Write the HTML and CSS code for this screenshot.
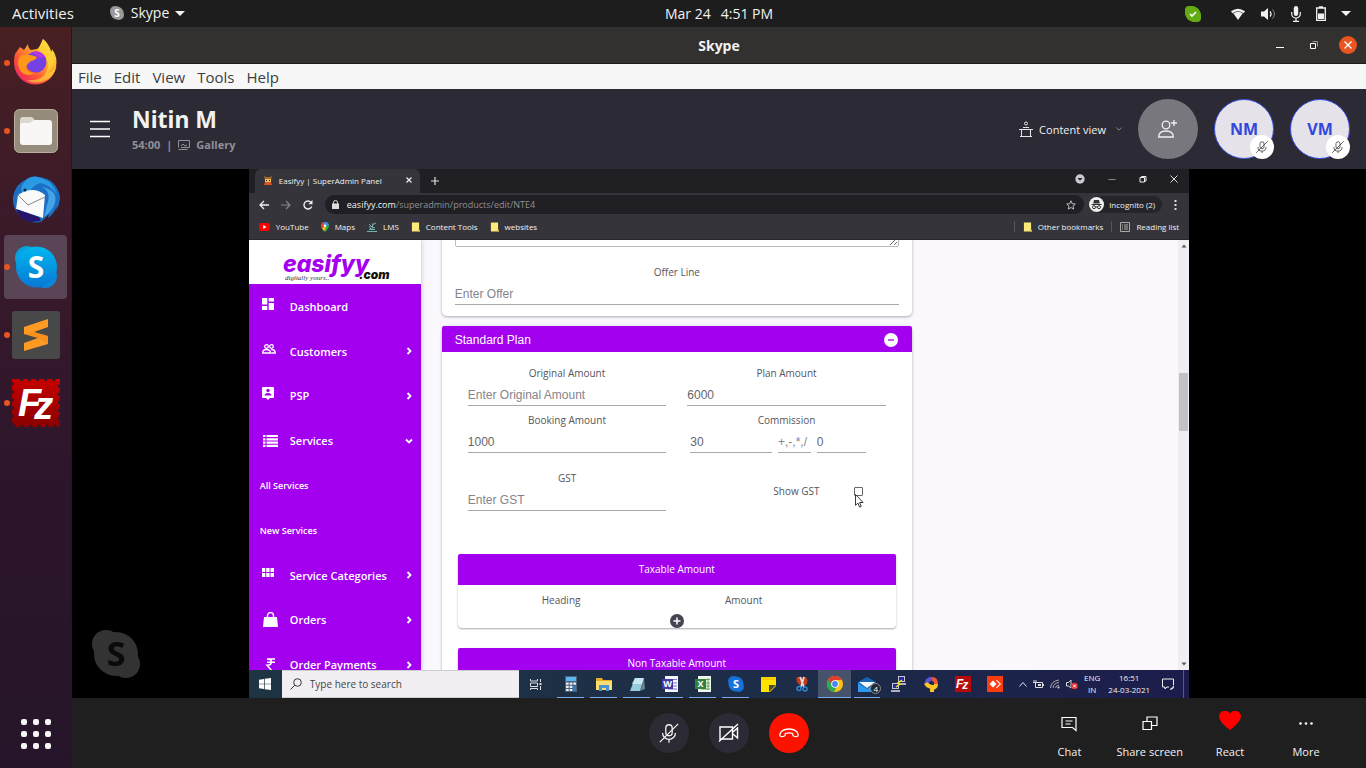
FILE: index.html
```html
<!DOCTYPE html>
<html lang="en">
<head>
<meta charset="utf-8">
<title>Skype</title>
<link rel="stylesheet" href="styles.css">
</head>
<body>
<svg class="defs" aria-hidden="true">
  <defs>
    <linearGradient id="sky" x1="0" y1="0" x2="0" y2="1"><stop offset="0" stop-color="#00b7f0"/><stop offset="1" stop-color="#0878d4"/></linearGradient>
    <linearGradient id="fire" x1="1" y1="0" x2="0" y2="1"><stop offset="0" stop-color="#fff44f"/><stop offset=".35" stop-color="#ffb02a"/><stop offset=".65" stop-color="#ff5634"/><stop offset="1" stop-color="#e5107a"/></linearGradient>
    <linearGradient id="red" x1="0" y1="0" x2="0" y2="1"><stop offset="0" stop-color="#c40000"/><stop offset="1" stop-color="#8c0000"/></linearGradient>
    <symbol id="mic-off" viewBox="0 0 24 24"><g fill="none" stroke="currentColor" stroke-width="1.4"><rect x="8.500" y="3" width="7" height="12" rx="3.500"/><path d="M5 12a7 7 0 0 0 14 0M12 19v3.500M2 22 22 2"/></g></symbol>
    <symbol id="folder" viewBox="0 0 10 10"><path d="M1 0h8v8l1 2H1z" fill="#fbe97a"/><path d="M8 8h2v2H8z" fill="#d9b93c"/></symbol>
    <symbol id="chev" viewBox="0 0 8 8"><path d="M2.500 1 5.500 4l-3 3" fill="none" stroke="currentColor" stroke-width="1.800"/></symbol>
  </defs>
</svg>

<header class="topbar">
  <div class="topbar-left">
    <button class="plain">Activities</button>
    <button class="plain app-menu">
      <svg width="14" height="14" viewBox="0 0 14 14"><rect width="10" height="10" rx="5" fill="#999"/><rect x="4" y="4" width="10" height="10" rx="5" fill="#999"/><circle cx="7" cy="7" r="6.500" fill="#999"/><text x="7" y="10.500" class="svg-s" font-size="10">S</text></svg>
      <span>Skype</span>
      <svg width="10" height="5" viewBox="0 0 10 5"><path d="M0 0h10L5 5z" fill="#f2f2f2"/></svg>
    </button>
  </div>
  <div class="clock"><span>Mar 24</span><span>4:51 PM</span></div>
  <div class="tray">
    <svg class="tray-skype" width="16" height="16" viewBox="0 0 16 16"><rect width="11" height="11" rx="4" fill="#62ab12"/><rect x="5" y="5" width="11" height="11" rx="4" fill="#62ab12"/><circle cx="8" cy="8" r="7.500" fill="#62ab12"/><path d="m5 8 2 2 4-4" fill="none" stroke="#fff" stroke-width="1.600"/></svg>
    <svg width="16" height="14" viewBox="0 0 16 14"><path d="M8 13 3.300 6.300q4.700-3 9.400 0z" fill="#f2f2f2"/><path d="M1 4.300q7-5 14 0l-1.500 2q-5.500-4-11 0z" fill="#f2f2f2"/></svg>
    <svg width="15" height="14" viewBox="0 0 15 14"><path d="M0 4.500h3L7 1v12L3 9.500H0z" fill="#f2f2f2"/><path d="M9 4.500q2 2.500 0 5" fill="none" stroke="#f2f2f2" stroke-width="1.300"/><path d="M11.500 2.500q4 4.500 0 9" fill="none" stroke="#888"/></svg>
    <svg width="10" height="16" viewBox="0 0 10 16"><rect x="2.800" width="4.400" height="10" rx="2.200" fill="#f2f2f2"/><path d="M.7 6v2a4.300 4 0 0 0 8.600 0V6M5 12v3M2 15.300h6" fill="none" stroke="#f2f2f2" stroke-width="1.200"/></svg>
    <svg width="10" height="15" viewBox="0 0 10 15"><path d="M.7 2h8.600v12.300H.7zM3 1h4" fill="none" stroke="#f2f2f2" stroke-width="1.300"/><path d="M2 7.500h6V13H2z" fill="#f2f2f2"/></svg>
    <svg width="10" height="5" viewBox="0 0 10 5"><path d="M0 0h10L5 5z" fill="#f2f2f2"/></svg>
  </div>
</header>

<div class="desktop">
  <nav class="dock" aria-label="Dock">
    <button class="dock-item running" aria-label="Firefox">
      <svg width="48" height="48" viewBox="0 0 48 48"><path d="M3 15 8 8l4 3 4-6q0 4 3 6l6-1q3-2 6-10 6 5 8 13 1-1 1-3 6 8 4 18a21 21 0 0 1-41 2Q1 23 3 15z" fill="url(#fire)"/><path d="M31 0q6 5 9 14 5 12-4 20 9-3 9-10A21 21 0 0 1 14 41q20 2 22-14 0-9-9-13 0-7 4-14z" fill="#ffd83a" opacity=".65"/><circle cx="24" cy="23" r="10.500" fill="#7541e5"/><path d="M20 13q9-3 14 6-3-2-7 0z" fill="#b833e1"/><path d="M8 17q8-3 17 1-1 3-6 4-3 2-5 6 2 6 9 6-10 5-15-3Q4 23 8 17z" fill="#ff9818"/></svg>
    </button>
    <button class="dock-item running" aria-label="Files">
      <svg width="48" height="48" viewBox="0 0 48 48"><rect x="2.500" y="2.500" width="43" height="43" rx="5" fill="#958c7b" stroke="#b7b09f"/><path d="M8 13q0-3 3-3h8q2 0 3 2l1 2h14q3 0 3 3v17q0 3-3 3H11q-3 0-3-3z" fill="#ddd8cd"/><path d="M8 18q0-2 2-2h8l4-3h15q3 0 3 3v19q0 3-3 3H11q-3 0-3-3z" fill="#f8f7f5"/></svg>
    </button>
    <button class="dock-item" aria-label="Thunderbird">
      <svg width="48" height="48" viewBox="0 0 48 48"><path d="M1 22Q3 9 15 4q5-4 12-2 17 2 21 19 0 8-4 15l1-5q-3 8-9 12l1-4-8 8q-12 2-20-5Q0 34 1 22z" fill="#1b6fc4"/><path d="M15 4q6-4 14-1 13 4 16 17-6-10-17-12-6 2-10 8l-6 3Q5 14 15 4z" fill="#2a9ae2"/><path d="M30 12q10 5 5 18l-3 12q8-5 11-14 3-13-13-16z" fill="#45a3e8"/><path d="M6 20q15-10 27 0l-2 23-27-9z" fill="#fafafa"/><path d="m6 20 10 10 17-8" fill="none" stroke="#888"/><path d="M4 34q2 9 13 13l12-1-2-4z" fill="#27146b"/><circle cx="13" cy="15" r="1.500" fill="#0b2344"/></svg>
    </button>
    <button class="dock-item running active" aria-label="Skype">
      <svg width="48" height="48" viewBox="0 0 48 48"><circle cx="15" cy="15" r="12" fill="#0aa0dc"/><circle cx="33" cy="33" r="12" fill="#0c86d8"/><circle cx="24.500" cy="24" r="20.500" fill="url(#sky)"/><text x="24" y="35" class="svg-s" font-size="30">S</text></svg>
    </button>
    <button class="dock-item running" aria-label="Sublime Text">
      <svg width="48" height="48" viewBox="0 0 48 48"><rect width="48" height="48" rx="3" fill="#484848"/><path d="m12 16 24-8v8l-14 5 14 4v8l-24 7v-8l14-5-14-4z" fill="#ff9b22"/><path d="m12 23 10-2 14 4v8l-10-6z" fill="#ef8618" opacity=".5"/></svg>
    </button>
    <button class="dock-item running" aria-label="FileZilla">
      <svg width="48" height="48" viewBox="0 0 48 48"><rect x="2.500" y="2.500" width="43" height="43" fill="url(#red)" stroke="url(#red)" stroke-width="5" stroke-dasharray="5.500 2.650"/><rect x="2" y="2" width="44" height="44" fill="url(#red)"/><text x="6" y="37" class="svg-fz" font-size="38">F<tspan dx="-7" dy="3">z</tspan></text></svg>
    </button>
    <button class="dock-apps" aria-label="Show applications"><i></i><i></i><i></i><i></i><i></i><i></i><i></i><i></i><i></i></button>
  </nav>

  <main class="window">
    <div class="titlebar">
      <span></span>
      <h1 class="window-title">Skype</h1>
      <div class="window-buttons">
        <button class="plain win-btn" aria-label="Minimize"><svg width="8" height="8" viewBox="0 0 8 8"><path d="M0 6.500h8" stroke="#fff"/></svg></button>
        <button class="plain win-btn" aria-label="Restore"><svg width="8" height="8" viewBox="0 0 8 8"><path d="M.5 2.500h5v5h-5z" fill="none" stroke="#fff"/><path d="M2.500.5h5v5" fill="none" stroke="#999"/></svg></button>
        <button class="plain win-btn win-close" aria-label="Close"><svg width="8" height="8" viewBox="0 0 8 8"><path d="m.5.5 7 7m0-7-7 7" stroke="#fff" stroke-width="1.400"/></svg></button>
      </div>
    </div>
    <div class="menubar">
      <button class="plain">File</button><button class="plain">Edit</button><button class="plain">View</button><button class="plain">Tools</button><button class="plain">Help</button>
    </div>

    <div class="call-header">
      <button class="plain hamburger" aria-label="Menu"><svg width="20" height="18" viewBox="0 0 20 18"><path d="M0 1.500h20M0 9h20M0 16.500h20" stroke="#fff" stroke-width="1.500"/></svg></button>
      <div class="call-info">
        <h2 class="call-name">Nitin M</h2>
        <div class="call-meta"><span>54:00</span><span>|</span><svg width="12" height="10" viewBox="0 0 12 10"><path d="M3 7.500h8.500v-7H.5v7M.5 9.500h9" fill="none" stroke="#929099"/><path d="m3 6 2-2 2 2 2-1" fill="none" stroke="#929099"/></svg><span>Gallery</span></div>
      </div>
      <button class="plain content-view">
        <svg width="14" height="16" viewBox="0 0 14 16"><g fill="none" stroke="#e6e6e6"><circle cx="7" cy="2.500" r="1.500"/><path d="M4 6.500h6M0 8.500h14M2.500 9v6M11.500 9v6M1 15.500h12"/></g></svg>
        <span>Content view</span>
        <svg width="6" height="4" viewBox="0 0 6 4"><path d="m.3.5 2.700 2.700L5.700.5" fill="none" stroke="#8b8992"/></svg>
      </button>
      <div class="people">
        <button class="avatar add" aria-label="Add people"><svg width="22" height="20" viewBox="0 0 22 20"><g fill="none" stroke="#f0f0f0" stroke-width="1.300"><circle cx="9" cy="6" r="3.800"/><path d="M1.700 18q0-6 7.300-6t7.300 6zM17 1v6M14 4h6"/></g></svg></button>
        <div class="avatar person">NM<span class="badge"><svg width="14" height="14"><use href="#mic-off"/></svg></span></div>
        <div class="avatar person">VM<span class="badge"><svg width="14" height="14"><use href="#mic-off"/></svg></span></div>
      </div>
    </div>

    <section class="stage">
      <svg class="watermark" width="48" height="48" viewBox="0 0 48 48"><circle cx="14" cy="14" r="14" fill="#333"/><circle cx="34" cy="34" r="14" fill="#333"/><circle cx="24" cy="24" r="22" fill="#333"/><text x="24" y="36" class="svg-s dark" font-size="34">S</text></svg>

      <div class="shared">
        <div class="tabstrip">
          <div class="tab">
            <svg width="10" height="10" viewBox="0 0 10 10"><path d="m1 1 2 1h4l2-1-1 4H2z" fill="#a8672a"/><path d="M2 4h6v3H2z" fill="#f0c05a"/><path d="M2 7h6l1 3H1z" fill="#d8572a"/><path d="M3 5h1v1H3zM6 5h1v1H6z" fill="#222"/></svg>
            <span>Easifyy | SuperAdmin Panel</span>
            <button class="plain" aria-label="Close tab"><svg width="6" height="6" viewBox="0 0 6 6"><path d="m.5.5 5 5m0-5-5 5" stroke="#eee" stroke-width="1.200"/></svg></button>
          </div>
          <button class="plain new-tab" aria-label="New tab"><svg width="8" height="8" viewBox="0 0 8 8"><path d="M4 0v8M0 4h8" stroke="#ddd" stroke-width="1.200"/></svg></button>
          <div class="chrome-buttons">
            <svg width="10" height="10" viewBox="0 0 10 10"><circle cx="5" cy="5" r="4.700" fill="#c9c9cf"/><path d="M2.500 4h5L5 6.800z" fill="#222"/></svg>
            <svg width="8" height="8" viewBox="0 0 8 8"><path d="M.5 4.500h7" stroke="#888"/></svg>
            <svg width="8" height="8" viewBox="0 0 8 8"><path d="M1 2.500h4.500V7H1zM2.500 2.500v-1H7V6H5.500" fill="none" stroke="#eee"/></svg>
            <svg width="8" height="8" viewBox="0 0 8 8"><path d="m.5.5 7 7m0-7-7 7" stroke="#ddd"/></svg>
          </div>
        </div>
        <div class="toolbar">
          <button class="plain" aria-label="Back"><svg width="10" height="10" viewBox="0 0 10 10"><path d="M10 5H1m4-4L1 5l4 4" fill="none" stroke="#eee" stroke-width="1.300"/></svg></button>
          <button class="plain" aria-label="Forward"><svg width="10" height="10" viewBox="0 0 10 10"><path d="M0 5h9M5 1l4 4-4 4" fill="none" stroke="#85858b" stroke-width="1.200"/></svg></button>
          <button class="plain" aria-label="Reload"><svg width="10" height="10" viewBox="0 0 10 10"><path d="M8.700 6.500A4 4 0 1 1 8 2.300" fill="none" stroke="#eee" stroke-width="1.400"/><path d="M9.500 0v4.300H5.300z" fill="#eee"/></svg></button>
          <div class="address">
            <svg width="7" height="9" viewBox="0 0 7 9"><path d="M0 3.500h7V9H0z" fill="#ddd"/><path d="M1.500 4V2.500a2 2 0 0 1 4 0V4" fill="none" stroke="#ddd"/></svg>
            <div class="url" role="textbox" aria-label="Address">easifyy.com<span>/superadmin/products/edit/NTE4</span></div>
            <svg width="10" height="10" viewBox="0 0 10 10"><path d="m5 .8 1.200 2.900 3.100.3L7 6.100l.7 3L5 7.500 2.300 9.100l.7-3L.7 4l3.100-.3z" fill="none" stroke="#ccc" stroke-width=".9"/></svg>
          </div>
          <div class="incognito">
            <svg width="15" height="15" viewBox="0 0 15 15"><circle cx="7.500" cy="7.500" r="7.500" fill="#eee"/><path d="M5 3h5l.8 3.500H4.200zM2.500 7h10v1h-10z" fill="#333"/><g fill="none" stroke="#333"><circle cx="5" cy="10.200" r="1.500"/><circle cx="10" cy="10.200" r="1.500"/><path d="M6.500 10h2"/></g></svg>
            <span>Incognito (2)</span>
          </div>
          <button class="plain kebab" aria-label="Browser menu"><svg width="3" height="10" viewBox="0 0 3 10"><path d="M.5 0h2v2h-2zm0 4h2v2h-2zm0 4h2v2h-2z" fill="#ddd"/></svg></button>
        </div>
        <div class="bookmarks">
          <a href="#"><svg width="11" height="8" viewBox="0 0 11 8"><rect width="11" height="8" rx="2" fill="#f00"/><path d="m4.200 2 3.300 2-3.300 2z" fill="#fff"/></svg>YouTube</a>
          <a href="#"><svg width="8" height="10" viewBox="0 0 8 10"><path d="M4 10Q0 6 0 4a4 4 0 0 1 8 0q0 2-4 6z" fill="#34a853"/><path d="M0 4a4 4 0 0 1 4-4L2 6.500Q0 5 0 4z" fill="#ea4335"/><path d="M3 0q3-1 5 3L4 4z" fill="#4285f4"/><path d="M1 6.500 4 4l1 2-2 3z" fill="#fbbc04"/><circle cx="4" cy="3.800" r="1.200" fill="#fff"/></svg>Maps</a>
          <a href="#"><svg width="10" height="10" viewBox="0 0 10 10"><path d="M0 9.500h10M2 7.500h6M4 5q2-3 5-4M2 2l3 3 3 1M6 1 5 7M3 4q-1 2 1 3" fill="none" stroke="#6fb5ac"/></svg>LMS</a>
          <a href="#"><svg width="9" height="10"><use href="#folder"/></svg>Content Tools</a>
          <a href="#"><svg width="9" height="10"><use href="#folder"/></svg>websites</a>
          <a href="#" class="push"><svg width="9" height="10"><use href="#folder"/></svg>Other bookmarks</a>
          <a href="#" class="reading"><svg width="10" height="10" viewBox="0 0 10 10"><path d="M.5.5h9v9h-9zM2 3h1m1 0h4M2 5h1m1 0h4M2 7h1m1 0h4" fill="none" stroke="#aaa"/></svg>Reading list</a>
        </div>

        <div class="page">
          <aside class="side">
            <div class="logo">
              <svg width="112" height="34" viewBox="0 0 112 34"><text x="4" y="23" class="logo-main">easifyy</text><text x="80" y="30" class="logo-com">.com</text><text x="6" y="31" class="logo-tag">digitally yours..</text></svg>
            </div>
            <nav class="side-nav">
              <a href="#"><svg width="12" height="12" viewBox="0 0 12 12"><path d="M0 0h5.300v6.500H0zM6.700 0H12v3.500H6.700zM0 8h5.300v4H0zM6.700 5H12v7H6.700z" fill="#fff"/></svg><span>Dashboard</span></a>
              <a href="#"><svg width="14" height="10" viewBox="0 0 14 10"><g fill="none" stroke="#fff" stroke-width="1.300"><circle cx="4.500" cy="2.500" r="1.800"/><circle cx="9.500" cy="2.500" r="1.800"/><path d="M.7 9q0-3.500 3.800-3.500T8.500 9zM9 5.500q4.300 0 4.300 3.500h-4"/></g></svg><span>Customers</span><svg width="8" height="8"><use href="#chev"/></svg></a>
              <a href="#"><svg width="12" height="13" viewBox="0 0 12 13"><path d="M1 0h10q1 0 1 1v9q0 1-1 1H8l-2 2-2-2H1q-1 0-1-1V1q0-1 1-1z" fill="#fff"/><circle cx="6" cy="3.500" r="1.700" fill="#a300f0"/><path d="M2.500 8.500q0-2.500 3.500-2.500t3.500 2.500z" fill="#a300f0"/></svg><span>PSP</span><svg width="8" height="8"><use href="#chev"/></svg></a>
              <a href="#"><svg class="wide" width="15" height="12" viewBox="0 0 15 12"><path d="M0 1h2.500m1 0H15M0 4.300h2.500m1 0H15M0 7.600h2.500m1 0H15M0 10.900h2.500m1 0H15" stroke="#fff" stroke-width="2.200"/></svg><span>Services</span><svg width="8" height="8" viewBox="0 0 8 8"><path d="m1 2.500 3 3 3-3" fill="none" stroke="#fff" stroke-width="1.800"/></svg></a>
              <a href="#" class="sub">All Services</a>
              <a href="#" class="sub">New Services</a>
              <a href="#"><svg width="12" height="9" viewBox="0 0 12 9"><path d="M0 0h3.300v4H0zm4.200 0h3.400v4H4.200zm4.300 0H12v4H8.500zM0 5h3.300v4H0zm4.200 0h3.400v4H4.200zm4.300 0H12v4H8.500z" fill="#fff"/></svg><span>Service Categories</span><svg width="8" height="8"><use href="#chev"/></svg></a>
              <a href="#"><svg class="wide" width="15" height="15" viewBox="0 0 15 15"><path d="M1 5h13l1 10H0z" fill="#fff"/><path d="M4.500 7V3.500a3 3 0 0 1 6 0V7" fill="none" stroke="#fff" stroke-width="1.400"/></svg><span>Orders</span><svg width="8" height="8"><use href="#chev"/></svg></a>
              <a href="#"><svg class="wide" width="15" height="13" viewBox="0 0 15 13"><path d="M4 1h8M4 4.200h8M4 1.200c6-1 6 6 0 6L9 13" fill="none" stroke="#fff" stroke-width="1.600"/></svg><span>Order Payments</span><svg width="8" height="8"><use href="#chev"/></svg></a>
            </nav>
          </aside>

          <form class="content">
            <section class="card offer">
              <textarea aria-label="Description"></textarea>
              <div class="field"><label for="offer">Offer Line</label><input id="offer" placeholder="Enter Offer"></div>
            </section>
            <section class="card plan">
              <header class="plan-head"><h3>Standard Plan</h3><button type="button" class="plain" aria-label="Collapse"><svg width="14" height="14" viewBox="0 0 14 14"><circle cx="7" cy="7" r="7" fill="#fff"/><path d="M4 7h6" stroke="#a300f0" stroke-width="1.300"/></svg></button></header>
              <div class="plan-grid">
                <div class="field"><label for="orig">Original Amount</label><input id="orig" placeholder="Enter Original Amount"></div>
                <div class="field"><label for="plan">Plan Amount</label><input id="plan" value="6000"></div>
                <div class="field"><label for="book">Booking Amount</label><input id="book" value="1000"></div>
                <div class="field"><label for="comm">Commission</label><div class="commission"><input id="comm" value="30"><input aria-label="Operator" placeholder="+,-,*,/"><input aria-label="Adjustment" value="0"></div></div>
                <div class="field last"><label for="gst">GST</label><input id="gst" placeholder="Enter GST"></div>
                <div class="show-gst"><label for="show">Show GST</label><span class="check-wrap"><input type="checkbox" id="show"><svg class="cursor" width="9" height="14" viewBox="0 0 9 14"><path d="M.5.5v10.800l2.400-2.200 1.700 4 1.700-.7-1.700-3.900h3.500z" fill="#fff" stroke="#222" stroke-width=".9"/></svg></span></div>
              </div>
              <section class="tax">
                <h4>Taxable Amount</h4>
                <div class="tax-cols"><span>Heading</span><span>Amount</span></div>
                <button type="button" class="plain tax-add" aria-label="Add taxable amount"><svg width="14" height="14" viewBox="0 0 14 14"><circle cx="7" cy="7" r="7" fill="#464450"/><path d="M7 3.500v7M3.500 7h7" stroke="#fff" stroke-width="1.500"/></svg></button>
              </section>
              <section class="tax">
                <h4>Non Taxable Amount</h4>
              </section>
            </section>
          </form>
          <div class="scrollbar"><svg width="6" height="4" viewBox="0 0 6 4"><path d="M.5 3.500h5L3 .5z" fill="#555"/></svg><div class="track"><div class="thumb"></div></div><svg width="6" height="4" viewBox="0 0 6 4"><path d="M.5.5h5L3 3.500z" fill="#555"/></svg></div>
        </div>

        <div class="taskbar">
          <button class="plain start" aria-label="Start"><svg width="12" height="12" viewBox="0 0 12 12"><path d="m0 1.700 5-.8v4.800H0zM5.700.8 12 0v5.700H5.700zM0 6.300h5v4.800l-5-.8zM5.700 6.300H12V12l-6.300-.8z" fill="#fff"/></svg></button>
          <label class="search"><svg width="12" height="12" viewBox="0 0 12 12"><circle cx="7.500" cy="4.500" r="3.800" fill="none" stroke="#333"/><path d="M4.800 7.200.5 11.500" stroke="#333"/></svg><input aria-label="Search" placeholder="Type here to search"></label>
          <button class="plain taskview" aria-label="Task view"><svg width="12" height="11" viewBox="0 0 12 11"><path d="M.5 0v2h7V0M.5 4v3.500h7V4zM.5 11V9.500h7V11M10.500 0v3M10.500 7v4" fill="none" stroke="#ddd"/><path d="M9.500 4h2v2h-2z" fill="#ddd"/></svg></button>
          <div class="apps">
            <button class="open" aria-label="Calculator"><svg width="12" height="16" viewBox="0 0 12 16"><path d="M0 0h12v16H0z" fill="#4b5f7d"/><path d="M1 1h10v4H1z" fill="#59b8f0"/><path d="M1 6.500h2.700v2.300H1zm3.700 0h2.700v2.300H4.700zm3.600 0H11v2.300H8.300zM1 9.700h2.700V12H1zm3.700 0h2.700V12H4.700zM1 13h2.700v2H1zm3.700 0h2.700v2H4.700z" fill="#e6edf5"/><path d="M8.300 9.700H11V15H8.300z" fill="#2a7ec8"/></svg></button>
            <button class="open" aria-label="File Explorer"><svg width="16" height="14" viewBox="0 0 16 14"><path d="M0 1h6l1 2h9v10H0z" fill="#e5ae2e"/><path d="M0 4h16v9H0z" fill="#fbdc70"/><path d="M3 8h10v6h-3v-3H6v3H3z" fill="#4a93d3"/></svg></button>
            <button class="open" aria-label="Notepad"><svg width="16" height="15" viewBox="0 0 16 15"><path d="M6 1h9l-4 13H1z" fill="#94cddd"/><path d="m6 1 9 0-2 6H3z" fill="#c5e8ef"/><path d="m15 1 1 11-5 2z" fill="#68848c"/></svg></button>
            <button class="open" aria-label="Word"><svg width="16" height="16" viewBox="0 0 16 16"><path d="M3 0h13v16H3z" fill="#f3f4fc"/><path d="M6 3.500h9M6 7h9M6 10h9M6 13h9" stroke="#707fc5"/><path d="M0 3h11v10H0z" fill="#433aa5"/><text x="5.500" y="11" class="svg-s" font-size="9">W</text></svg></button>
            <button class="open" aria-label="Excel"><svg width="16" height="16" viewBox="0 0 16 16"><path d="M3 0h13v16H3z" fill="#eef8ed"/><path d="M6 3.500h9M6 7h9M6 10h9M6 13h9M13 2v12" stroke="#66a263"/><path d="M0 3h11v10H0z" fill="#2f8140"/><text x="5.500" y="11" class="svg-s" font-size="9">X</text></svg></button>
            <button class="open" aria-label="Skype"><svg width="16" height="16" viewBox="0 0 16 16"><circle cx="5" cy="5" r="5" fill="#0f6bd0"/><circle cx="11" cy="11" r="5" fill="#0f6bd0"/><circle cx="8" cy="8" r="7.500" fill="#1474db"/><text x="8" y="12" class="svg-s" font-size="11">S</text></svg></button>
            <button aria-label="Sticky Notes"><svg width="15" height="15" viewBox="0 0 15 15"><path d="M0 0h15v9l-6 6H0z" fill="#ffe400"/><path d="M8 15V8h7z" fill="#4b4a34"/><path d="M0 0h15v3H0z" fill="#ffd000"/></svg></button>
            <button aria-label="Snipping Tool"><svg width="14" height="16" viewBox="0 0 14 16"><path d="M2 1h9q3 4 0 8H5Q0 6 2 1z" fill="#c53a1c"/><path d="m5 1 4 10M9 1 6 11" stroke="#d9dee5" stroke-width="1.800"/><g fill="none" stroke="#2e86d3" stroke-width="1.500"><circle cx="4" cy="12.500" r="2"/><circle cx="10" cy="13" r="2"/></g></svg></button>
            <button class="open current" aria-label="Chrome"><svg width="16" height="16" viewBox="0 0 16 16"><circle cx="8" cy="8" r="8" fill="#fbc116"/><path d="M1 4a8 8 0 0 0 6 12l3-6z" fill="#2da94f"/><path d="M1 4 5 11 8 4z" fill="#2da94f"/><path d="M1 4a8 8 0 0 1 14 0H8L5 8z" fill="#e33b2e"/><circle cx="8" cy="8" r="3.800" fill="#fff"/><circle cx="8" cy="8" r="2.900" fill="#4285f4"/></svg></button>
            <button class="open tail" aria-label="Mail"><svg width="18" height="15" viewBox="0 0 18 15"><path d="m0 5 9-5 9 5v10H0z" fill="#1266b5"/><path d="m1 5 16 0-8 6z" fill="#f2f7fc"/><path d="m0 6 9 6 9-6v9H0z" fill="#2d9aed"/></svg><span class="count">4</span></button>
            <button class="tail" aria-label="PuTTY"><svg width="16" height="16" viewBox="0 0 16 16"><path d="M7 0h7v6H7zM1 7h7v6H1z" fill="#c7c7d2"/><path d="M8 1h5v4H8zM2 8h5v4H2z" fill="#2727a6"/><path d="M7 7h8v2H7zM0 14h9v2H0z" fill="#b2b2be"/><path d="m11 4-4 3 2 1-4 3" fill="none" stroke="#f3e422" stroke-width="1.400"/></svg></button>
            <button class="tail" aria-label="Media"><svg width="14" height="15" viewBox="0 0 14 15"><g fill="none" stroke-width="4"><path d="M3 8a4.500 4.500 0 0 1 5-6" stroke="#5f55d8"/><path d="M8 2q4 0 4 5" stroke="#f05638"/><path d="M12 7q0 4-5 4" stroke="#fbc625"/><path d="M2 6q1 3 6 4v5" stroke="#fbc625"/></g></svg></button>
            <button class="tail" aria-label="FileZilla"><svg width="16" height="16" viewBox="0 0 16 16"><path d="M0 0h16v16H0z" fill="#b60b0b"/><text x="1" y="12" class="svg-fz" font-size="12">F<tspan dx="-1" dy="1">z</tspan></text></svg></button>
            <button class="tail" aria-label="AnyDesk"><svg width="16" height="16" viewBox="0 0 16 16"><path d="M0 0h16v16H0z" fill="#fb3b10"/><path d="m6 4.500 3.500 3.500L6 11.500 2.500 8z" fill="#fff"/><path d="m9 4.500 1-.5 4 4-4 4-1-.5L12.500 8z" fill="#fff"/></svg></button>
          </div>
          <div class="sys">
            <svg width="8" height="5" viewBox="0 0 8 5"><path d="m.5 4.500 3.500-4 3.500 4" fill="none" stroke="#ddd"/></svg>
            <svg width="11" height="9" viewBox="0 0 11 9"><path d="M2.500 2.500h7v5h-7zM10.500 4v2M1 0v2m2-2v2M0 2.500h4" fill="none" stroke="#ddd"/><path d="M5 4h3v2H5z" fill="#ddd"/></svg>
            <svg width="10" height="10" viewBox="0 0 10 10"><path d="M.5 9Q1 2 9 1M3 9q.5-5 6-5.500M5.500 9q.5-2.500 3.500-3" fill="none" stroke="#aaa"/><circle cx="8.500" cy="8.500" r="1" fill="#ddd"/></svg>
            <svg width="12" height="11" viewBox="0 0 12 11"><path d="M.5 3.500h2L5 1v8L2.500 7h-2z" fill="none" stroke="#ddd"/><circle cx="8.500" cy="7" r="3.300" fill="#e03030"/><path d="m7 5.500 3 3m0-3-3 3" stroke="#fff"/></svg>
          </div>
          <div class="lang"><span>ENG</span><span>IN</span></div>
          <div class="time"><span>16:51</span><span>24-03-2021</span></div>
          <button class="plain notes" aria-label="Notifications"><svg width="12" height="12" viewBox="0 0 12 12"><path d="M.5 1h11v6M.5 1v8H3v2l2-2h2" fill="none" stroke="#eee"/><path d="M8 11.500q4 0 4-4-1 2-4 4z" fill="#eee" stroke="#eee" stroke-width=".7"/></svg></button>
        </div>
      </div>
    </section>

    <footer class="controls">
      <span></span>
      <div class="round-group">
        <button class="round" aria-label="Unmute"><svg width="22" height="22"><use href="#mic-off"/></svg></button>
        <button class="round" aria-label="Start video"><svg width="22" height="20" viewBox="0 0 22 20"><g fill="none" stroke="#fff" stroke-width="1.400"><path d="M2 4h12.500v12H2zM15 9l4.500-4v10L15 11M1 18.500 20 1"/></g></svg></button>
        <button class="round end" aria-label="End call"><svg width="20" height="10" viewBox="0 0 20 10"><path d="M10 1q5 0 8 3 2 3 .5 4.300-1.500.8-4-.3-1-.5-.8-2.500-3.700-1.200-7.400 0Q6.500 7.500 5.500 8q-2.500 1.100-4 .3Q0 7 2 4q3-3 8-3z" fill="none" stroke="#fff" stroke-width="1.300"/></svg></button>
      </div>
      <div class="actions">
        <button><svg width="24" height="24" viewBox="0 0 24 24"><path d="M5 6.500h14v13l-3.500-3H5z" fill="none" stroke="#fff" stroke-width="1.200"/><path d="M8.500 10h7M8.500 13h5" stroke="#fff" stroke-width="1.200"/></svg><span>Chat</span></button>
        <button><svg width="24" height="24" viewBox="0 0 24 24"><path d="M5 10.500h8.500v8H5zM9 10V6h10v8.500h-5" fill="none" stroke="#fff" stroke-width="1.200"/></svg><span>Share screen</span></button>
        <button><svg width="24" height="24" viewBox="0 0 24 24"><path d="M12 19Q1 11 1 5.500C1 0 8-2.500 12 2.500 16-2.500 23 0 23 5.500 23 11 12 19 12 19z" fill="#f00"/></svg><span>React</span></button>
        <button><svg width="24" height="24" viewBox="0 0 24 24"><circle cx="6.500" cy="12.500" r="1.300" fill="#fff"/><circle cx="12" cy="12.500" r="1.300" fill="#fff"/><circle cx="17.500" cy="12.500" r="1.300" fill="#fff"/></svg><span>More</span></button>
      </div>
    </footer>
  </main>
</div>
</body>
</html>
```

FILE: styles.css
```css
* { box-sizing: border-box; }
html, body { height: 100%; }
body {
  margin: 0;
  display: flex;
  flex-direction: column;
  overflow: hidden;
  background: #000;
  color: #f2f2f2;
  font-family: "Open Sans", "Noto Sans", sans-serif;
  font-size: 14px;
}
svg { display: block; flex: none; }
h1, h2, h3, h4 { margin: 0; }
button, input, textarea { font: inherit; color: inherit; margin: 0; }
button { background: none; border: 0; padding: 0; display: flex; align-items: center; justify-content: center; }
a { color: inherit; text-decoration: none; }
.defs { position: absolute; width: 0; height: 0; }
.svg-s { font-family: "Open Sans", sans-serif; font-weight: 700; text-anchor: middle; fill: #fff; }
.svg-s.dark { fill: #0a0a0a; }
.svg-fz { font-family: "Liberation Sans", sans-serif; font-weight: 700; font-style: italic; fill: #fff; }

/* Desktop panel */
.topbar {
  flex: none;
  height: 27px;
  display: grid;
  grid-template-columns: 1fr auto 1fr;
  align-items: center;
  background: #1d1d1d;
}
.topbar-left { display: flex; align-items: center; gap: 36px; padding-left: 12px; line-height: 20px; padding-bottom: 1px; }
.topbar-left .plain:first-child { font-size: 15px; }
.app-menu { gap: 6px; }
.app-menu svg:first-child { margin-right: 1px; }
.clock { display: flex; gap: 10px; padding: 0 0 1px 72px; font-size: 14px; }
.tray { display: flex; align-items: center; justify-content: flex-end; gap: 15px; padding-right: 15px; }
.tray-skype { margin-right: 14px; }

.desktop { flex: 1; min-height: 0; display: flex; }
.dock {
  flex: none;
  width: 72px;
  padding: 4px;
  display: flex;
  flex-direction: column;
  gap: 4px;
  border-right: 1px solid #241520;
  background: linear-gradient(#482022, #3b1a29 25%, #2d162c 60%, #26152a);
}
.dock-item { position: relative; height: 64px; border-radius: 4px; }
.dock-item.active { background: #5a4556; }
.dock-item.running::before {
  content: "";
  position: absolute;
  left: 0;
  top: 29px;
  width: 6px;
  height: 6px;
  border-radius: 50%;
  background: #e95420;
}
.dock-apps { margin-top: auto; margin-bottom: 15px; display: grid; grid-template-columns: repeat(3, 6px); gap: 6px; }
.dock-apps i { width: 6px; height: 6px; border-radius: 2px; background: #f4f4f4; }

/* Window frame */
.window { flex: 1; min-width: 0; display: flex; flex-direction: column; }
.titlebar {
  flex: none;
  height: 37px;
  display: grid;
  grid-template-columns: 1fr auto 1fr;
  align-items: center;
  background: #333030;
  border-bottom: 1px solid #1c1c1c;
}
.window-title { font-size: 14px; font-weight: 700; }
.window-buttons { display: flex; justify-content: flex-end; gap: 16px; padding-right: 9px; }
.win-btn { width: 18px; height: 18px; border-radius: 50%; }
.win-close { background: #e95420; }
.menubar {
  flex: none;
  height: 25px;
  display: flex;
  align-items: center;
  gap: 12px;
  padding-left: 6px;
  background: #f7f7f7;
  color: #3d3d3d;
  font-size: 15px;
}

/* Call header */
.call-header {
  flex: none;
  height: 80px;
  display: flex;
  align-items: center;
  padding: 0 16px 0 18px;
  background: #2c2a34;
}
.call-info { margin-left: 22px; margin-right: auto; }
.call-name { font-size: 23px; line-height: 28px; font-family: "Noto Sans", sans-serif; }
.call-meta {
  display: flex;
  align-items: center;
  gap: 6px;
  color: #929099;
  font-size: 11px;
  line-height: 16px;
  font-weight: 700;
  margin-top: 4px;
}
.content-view { gap: 6px; font-size: 11px; margin-right: 16px; }
.content-view svg:last-child { margin-left: 4px; }
.people { display: flex; gap: 16px; }
.avatar { position: relative; width: 60px; height: 60px; border-radius: 50%; }
.add { background: #79777e; }
.person {
  display: flex;
  align-items: center;
  justify-content: center;
  background: #e5e2e9;
  border: 1px solid #3a4fe0;
  color: #3048dc;
  font-size: 16px;
  font-weight: 700;
}
.badge {
  position: absolute;
  right: -1px;
  bottom: -1px;
  width: 24px;
  height: 24px;
  border-radius: 50%;
  display: flex;
  align-items: center;
  justify-content: center;
  background: #fff;
  color: #444;
}

/* Stage with the shared screen */
.stage { position: relative; flex: 1; min-height: 0; display: flex; justify-content: center; background: #000; }
.watermark { position: absolute; left: 20px; bottom: 20px; }
.shared {
  height: 100%;
  aspect-ratio: 16 / 9;
  display: flex;
  flex-direction: column;
  overflow: hidden;
  font-size: 8px;
}
.tabstrip { flex: none; height: 24px; display: flex; background: #202024; padding-left: 6px; }
.tab {
  width: 165px;
  display: flex;
  align-items: center;
  gap: 6px;
  padding: 0 8px 2px 8px;
  background: #35343a;
  border-radius: 6px 6px 0 0;
}
.tab button { margin-left: auto; }
.new-tab { width: 30px; }
.chrome-buttons { margin-left: auto; display: flex; align-items: center; gap: 23px; padding: 0 11px 4px 0; }
.toolbar { flex: none; height: 23px; display: flex; align-items: center; gap: 12px; padding: 0 12px 0 10px; background: #35343a; }
.address {
  flex: 1;
  height: 19px;
  display: flex;
  align-items: center;
  gap: 8px;
  padding: 0 8px 0 7px;
  margin-right: -7px;
  border-radius: 10px;
  background: #202024;
  font-size: 9px;
}
.url { flex: 1; }
.url span { color: #8f8f95; }
.incognito { height: 17px; display: flex; align-items: center; gap: 5px; padding-right: 7px; border-radius: 9px; background: #252529; }
.bookmarks { flex: none; height: 24px; display: flex; align-items: center; gap: 12px; padding: 0 10px 2px 10px; background: #35343a; border-bottom: 1px solid #28282c; }
.bookmarks a { display: flex; align-items: center; gap: 6px; }
.bookmarks .push, .reading { border-left: 1px solid #55555b; padding-left: 8px; }
.bookmarks .push { margin-left: auto; }
.reading { margin-left: -4px; }

/* Admin page */
.page { flex: 1; min-height: 0; display: flex; overflow: hidden; background: #faf8fc; color: #55545c; font-size: 10px; }
.side { flex: none; width: 172px; background: #a300f0; box-shadow: 1px 0 4px #cfcbd6; }
.logo { height: 44px; display: flex; justify-content: center; align-items: center; padding-top: 8px; background: #fff; }
.logo-main { font-family: "Inter", sans-serif; font-weight: 800; font-style: italic; font-size: 23px; fill: #a300f0; }
.logo-com { font-family: "Inter", sans-serif; font-weight: 900; font-style: italic; font-size: 12px; fill: #111; }
.logo-tag { font-family: "Liberation Serif", serif; font-style: italic; font-size: 7px; fill: #333; }
.side-nav { height: 403px; display: flex; flex-direction: column; color: #fff; font-weight: 600; font-size: 11px; }
.side-nav a { flex: 1; display: flex; align-items: center; padding: 0 8px 0 13px; }
.side-nav a > svg:first-child { margin-bottom: 5px; }
.side-nav a > svg.wide:first-child { margin-left: 1px; margin-bottom: 0; }
.side-nav a > span { position: absolute; margin-left: 28px; }
.side-nav a > svg:nth-child(3) { margin-left: auto; }
.side-nav .sub { font-size: 9px; padding-left: 11px; }

.content { flex: 1; max-width: 512px; padding: 0 21px; margin-top: -33px; display: flex; flex-direction: column; gap: 10px; margin-bottom: -200px; }
.card { background: #fff; border-radius: 5px; box-shadow: 0 1px 3px #aaa6b0; }
.offer { padding: 0 13px 11px; }
.offer textarea { display: block; width: 100%; height: 40px; margin-bottom: 18px; border: 1px solid #bbb; border-radius: 2px; background: #fff; }
.field { display: flex; flex-direction: column; }
.field label, .show-gst label { text-align: center; line-height: 14px; }
.field input {
  width: 100%;
  min-width: 0;
  height: 26px;
  padding: 5px 0 0;
  border: 0;
  border-bottom: 1px solid #a9a8ad;
  border-radius: 0;
  background: none;
  color: #66656c;
  font-family: "Liberation Sans", Arial, sans-serif;
  font-size: 12px;
}
input::placeholder { color: #85848b; opacity: 1; }
.plan-head {
  height: 26px;
  display: flex;
  align-items: center;
  justify-content: space-between;
  padding: 2px 14px 0 13px;
  border-radius: 2px 2px 0 0;
  background: #a300f0;
  color: #fff;
}
.plan-head h3 { font-family: "Liberation Sans", Arial, sans-serif; font-size: 12px; font-weight: 400; }
.plan-grid { display: grid; grid-template-columns: 1fr 1fr; column-gap: 21px; row-gap: 7px; padding: 14px 26px 43px; }
.commission { display: grid; grid-template-columns: 5fr 2fr 3fr; gap: 6px; padding: 0 20px 0 3px; }
.plan-grid .last { margin-top: 11px; }
.show-gst { display: flex; align-items: center; justify-content: space-between; margin-top: 11px; padding: 0 23px 0 86px; }
.check-wrap { position: relative; display: flex; }
.check-wrap input { appearance: none; width: 9px; height: 9px; border: 1px solid #666; border-radius: 1px; background: #fff; }
.cursor { position: absolute; left: 1px; top: 7px; }
.tax { height: 74px; margin: 0 16px 20px; border-radius: 4px; box-shadow: 0 1px 2px #aaa6b0; background: #fff; }
.tax h4 { font-size: 10px; font-weight: 400; line-height: 31px; text-align: center; background: #a300f0; color: #fff; border-radius: 2px 2px 0 0; }
.tax-cols { display: grid; grid-template-columns: 3fr 3fr 1fr; padding: 8px 0 0 12px; line-height: 14px; text-align: center; }
.tax-add { margin: 7px auto 0; }
.scrollbar { flex: none; width: 11px; margin-left: auto; display: flex; flex-direction: column; align-items: center; padding: 4px 0; background: #f0eef2; }
.track { flex: 1; width: 100%; padding: 0 1px; }
.thumb { height: 14%; margin-top: 125px; background: #c2c1c5; }

/* Taskbar of the shared screen */
.taskbar { flex: none; height: 28px; display: flex; background: linear-gradient(90deg, #1f3442, #1d2c48 60%, #1c1c4c); }
.start { width: 33px; }
.search { flex: 1; min-width: 0; display: flex; align-items: center; gap: 8px; padding-left: 8px; background: #f1eff3; border: 1px solid #ccc; border-width: 1px 0; }
.search input { flex: 1; min-width: 0; border: 0; padding: 0; background: none; font-size: 10px; }
.search input::placeholder { color: #444; }
.taskview { width: 35px; padding-right: 2px; }
.apps { display: flex; }
.apps button { position: relative; width: 33px; }
.apps .tail { width: 32px; }
.apps .open::after { content: ""; position: absolute; left: 3px; right: 3px; bottom: 0; height: 1px; background: #76a9ee; }
.apps .current { background: #46536a; }
.apps .current::after { left: 0; right: 0; }
.count {
  position: absolute;
  right: 2px;
  bottom: 4px;
  width: 11px;
  height: 11px;
  border-radius: 50%;
  border: 1px solid #888;
  background: #222a35;
  color: #fff;
  font-size: 8px;
  line-height: 9px;
}
.sys { display: flex; align-items: center; gap: 6px; padding-left: 8px; }
.lang, .time { display: flex; flex-direction: column; justify-content: center; align-items: center; line-height: 12px; }
.lang { width: 28px; }
.time { width: 46px; }
.notes { width: 32px; margin-right: 5px; border-right: 1px solid #555a7c; }

/* Call controls */
.controls { flex: none; height: 70px; display: grid; grid-template-columns: 1fr auto 1fr; align-items: center; background: #1f1f1f; }
.round-group { display: flex; gap: 20px; padding-left: 20px; }
.round { width: 40px; height: 40px; border-radius: 50%; background: #2c2a34; }
.round.end { background: #fb1300; }
.actions { display: flex; justify-content: flex-end; padding: 5px 22px 0 0; }
.actions button { flex-direction: column; gap: 9px; min-width: 76px; padding: 0 9px; font-size: 11px; line-height: 16px; }
```
